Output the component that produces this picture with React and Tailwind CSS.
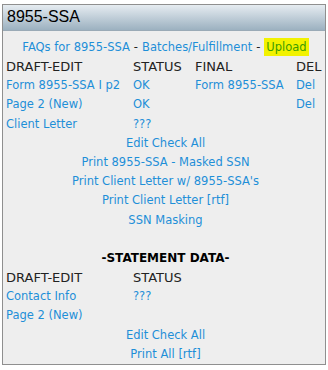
import React from "react";

const link = "text-[#1e8fd8]";
const cols = "grid grid-cols-[127px_62px_101px_1fr] h-[19.2px] items-center";

const topRows = [
  { name: "Form 8955-SSA I p2", status: "OK", final: "Form 8955-SSA", del: "Del" },
  { name: "Page 2 (New)", status: "OK", final: "", del: "Del" },
  { name: "Client Letter", status: "???", final: "", del: "" },
];

const topLinks = [
  "Edit Check All",
  "Print 8955-SSA - Masked SSN",
  "Print Client Letter w/ 8955-SSA's",
  "Print Client Letter [rtf]",
  "SSN Masking",
];

const App = () => {
  return (
    <div className="w-[328px] h-[370px] bg-white pt-[4px] pl-[2px]">
      <div className="w-[324px] h-[361px] border border-[#8f8f8f] bg-[#eeeeee] flex flex-col">
        {/* Title bar */}
        <div className="h-[27px] bg-gradient-to-b from-[#e6ecf1] to-[#9cb1c0] border-b border-[#9aaab6] flex items-center pl-[4px] text-[16px] text-black font-['Liberation_Sans',Arial,sans-serif]">
          8955-SSA
        </div>

        <div className="pt-[7px] pl-[3px] text-[11.5px] leading-[19.2px] font-['DejaVu_Sans',Verdana,sans-serif]">
          <div className="h-[19.2px] flex items-center justify-center">
            <span className={link}>FAQs for 8955-SSA</span>
            <span className="text-[#222] mx-[4px]">-</span>
            <span className={link}>Batches/Fulfillment</span>
            <span className="text-[#222] mx-[4px]">-</span>
            <span className="bg-[#f2f200] text-[#3c9c00] px-[2px] leading-[18px]">Upload</span>
          </div>

          {/* First table */}
          <div className={`${cols} text-[13px] text-[#222]`}>
            <span>DRAFT-EDIT</span>
            <span>STATUS</span>
            <span>FINAL</span>
            <span>DEL</span>
          </div>
          {topRows.map((r) => (
            <div key={r.name} className={`${cols} ${link}`}>
              <span>{r.name}</span>
              <span>{r.status}</span>
              <span>{r.final}</span>
              <span>{r.del}</span>
            </div>
          ))}
          {topLinks.map((t) => (
            <div key={t} className={`h-[19.2px] text-center ${link}`}>
              {t}
            </div>
          ))}

          <div className="h-[19.2px]" />
          <div className="h-[19.2px] text-center font-bold text-[12px] text-black">
            -STATEMENT DATA-
          </div>

          {/* Statement table */}
          <div className={`${cols} text-[13px] text-[#222]`}>
            <span>DRAFT-EDIT</span>
            <span>STATUS</span>
          </div>
          <div className={`${cols} ${link}`}>
            <span>Contact Info</span>
            <span>???</span>
          </div>
          <div className={`${cols} ${link}`}>
            <span>Page 2 (New)</span>
          </div>
          <div className={`h-[19.2px] text-center ${link}`}>Edit Check All</div>
          <div className={`h-[19.2px] text-center ${link}`}>Print All [rtf]</div>
        </div>
      </div>
    </div>
  );
};

export default App;
